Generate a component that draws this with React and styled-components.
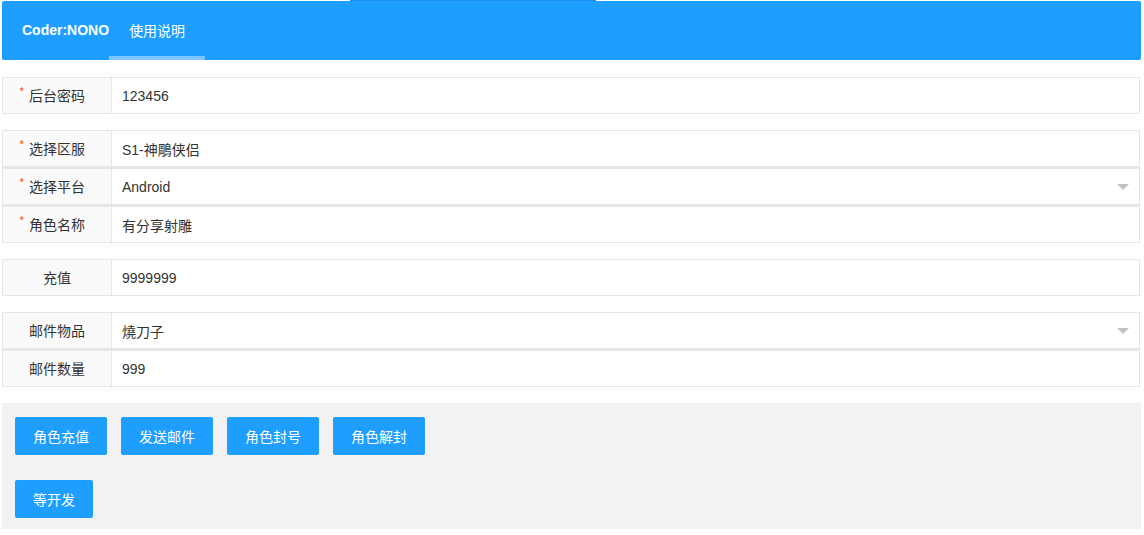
import React from 'react';
import styled, { createGlobalStyle } from 'styled-components';

const Global = createGlobalStyle`
    html, body { margin: 0; padding: 0; background: #fff; }
    body {
        font-family: "Liberation Sans", "Noto Sans CJK SC", sans-serif;
        font-size: 14px;
        color: #333;
    }
`;

const Page = styled.div`
    padding: 1px 3px 0 2px;
    position: relative;
`;

const Header = styled.div`
    position: relative;
    height: 59px;
    background: #1E9FFF;
    border-radius: 2px;
    display: flex;
    align-items: stretch;
    padding-left: 20px;
`;

const Loader = styled.div`
    position: absolute;
    top: -1px;
    left: 348px;
    width: 246px;
    height: 1px;
    background: #1a8de6;
`;

const Logo = styled.div`
    color: #fff;
    font-weight: bold;
    font-size: 14px;
    line-height: 59px;
`;

const NavItem = styled.div`
    position: relative;
    color: #fff;
    padding: 0 20px;
    line-height: 59px;
    font-family: "Noto Sans CJK SC", sans-serif;
    font-size: 14px;
    &::after {
        content: '';
        position: absolute;
        left: 0;
        right: 0;
        bottom: 0;
        height: 4px;
        background: ${p => (p.$active ? '#7cc7ff' : 'transparent')};
    }
`;

const Form = styled.div`
    padding-top: 17px;
    display: flex;
    flex-direction: column;
    gap: 16px;
`;

const Block = styled.div`
    display: flex;
    flex-direction: column;
`;

const Row = styled.div`
    display: flex;
    height: 35px;
    border: 1px solid #e6e6e6;
    margin-right: 1px;
    & + & { border-top: 2px solid #e6e6e6; }
`;

const Label = styled.div`
    position: relative;
    width: 108px;
    flex: none;
    background: #fafafa;
    border-right: 1px solid #e6e6e6;
    display: flex;
    align-items: center;
    justify-content: center;
    padding-bottom: 2px;
    font-family: "Noto Sans CJK SC", sans-serif;
    font-size: 14px;
    color: #333;
`;

const Star = styled.span`
    position: absolute;
    left: 16px;
    top: 8px;
    color: #FF5722;
    font-size: 12px;
    line-height: 12px;
`;

const Value = styled.div`
    flex: 1;
    display: flex;
    align-items: center;
    justify-content: space-between;
    padding: 0 10px;
    font-family: "Liberation Sans", "Noto Sans CJK SC", sans-serif;
    font-size: 14px;
    color: #333;
`;

const Caret = styled.span`
    width: 0;
    height: 0;
    border-left: 6px solid transparent;
    border-right: 6px solid transparent;
    border-top: 6px solid #c2c2c2;
`;

const Actions = styled.div`
    background: #f2f2f2;
    padding: 14px 13px 11px;
    display: flex;
    flex-direction: column;
    gap: 25px;
`;

const ButtonRow = styled.div`
    display: flex;
    gap: 14px;
`;

const Button = styled.button`
    height: 38px;
    width: ${p => p.$w || 92}px;
    padding: 0;
    border: none;
    border-radius: 2px;
    background: #1E9FFF;
    color: #fff;
    font-family: "Noto Sans CJK SC", sans-serif;
    font-size: 14px;
    cursor: pointer;
`;

const Field = ({ label, value, required, select }) => (
    <Row>
        <Label>{required && <Star>*</Star>}{label}</Label>
        <Value>
            <span>{value}</span>
            {select && <Caret />}
        </Value>
    </Row>
);

export default function App() {
    return (
        <Page>
            <Global />
            <Header>
                <Loader />
                <Logo>Coder:NONO</Logo>
                <NavItem $active>使用说明</NavItem>
            </Header>
            <Form>
                <Block>
                    <Field label="后台密码" value="123456" required />
                </Block>
                <Block>
                    <Field label="选择区服" value="S1-神鵰侠侣" required />
                    <Field label="选择平台" value="Android" required select />
                    <Field label="角色名称" value="有分享射雕" required />
                </Block>
                <Block>
                    <Field label="充值" value="9999999" />
                </Block>
                <Block>
                    <Field label="邮件物品" value="燒刀子" select />
                    <Field label="邮件数量" value="999" />
                </Block>
                <Actions>
                    <ButtonRow>
                        <Button>角色充值</Button>
                        <Button>发送邮件</Button>
                        <Button>角色封号</Button>
                        <Button>角色解封</Button>
                    </ButtonRow>
                    <ButtonRow>
                        <Button $w={78}>等开发</Button>
                    </ButtonRow>
                </Actions>
            </Form>
        </Page>
    );
}
